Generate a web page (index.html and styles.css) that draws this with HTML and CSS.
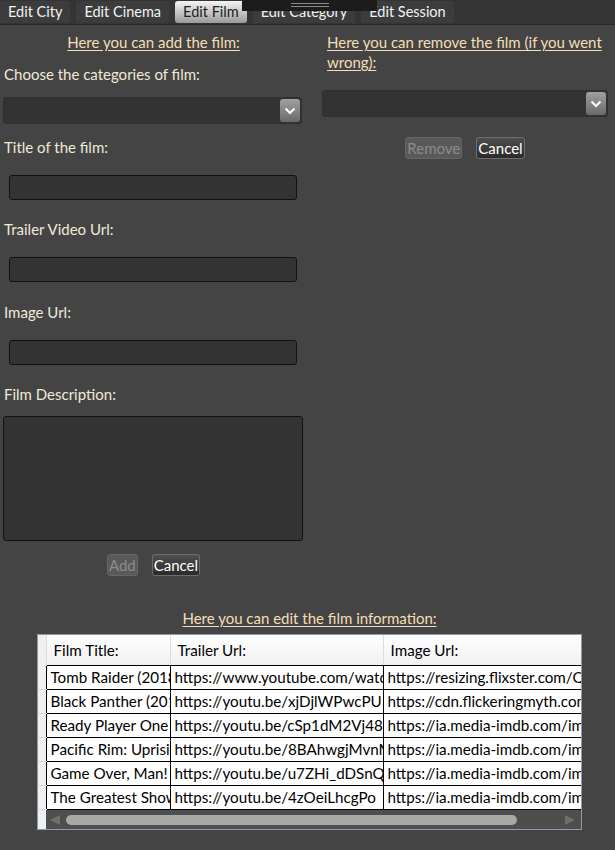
FILE: index.html
```html
<!DOCTYPE html>
<html>
<head>
<meta charset="utf-8">
<link rel="stylesheet" href="styles.css">
</head>
<body>
<div class="tabbar">
  <div class="tab">Edit City</div>
  <div class="tab">Edit Cinema</div>
  <div class="tab active">Edit Film</div>
  <div class="tab">Edit Category</div>
  <div class="tab">Edit Session</div>
  <div class="handle"><span></span><span></span></div>
</div>

<div class="top">
  <section class="col add">
    <h2 class="heading center">Here you can add the film:</h2>
    <div class="label l1">Choose the categories of film:</div>
    <div class="combo c-left">
      <span class="combo-btn"><svg width="20" height="23" viewBox="0 0 20 23"><path d="M5.5 9.5 L10 14 L14.5 9.5" fill="none" stroke="#fff" stroke-width="2.2"/></svg></span>
    </div>
    <div class="label l2">Title of the film:</div>
    <div class="input i1"></div>
    <div class="label l3">Trailer Video Url:</div>
    <div class="input i2"></div>
    <div class="label l4">Image Url:</div>
    <div class="input i3"></div>
    <div class="label l5">Film Description:</div>
    <div class="textarea"></div>
    <div class="buttons b-left">
      <button class="btn disabled">Add</button>
      <button class="btn">Cancel</button>
    </div>
  </section>

  <section class="col remove">
    <h2 class="heading rhead">Here you can remove the film (if you went wrong):</h2>
    <div class="combo c-right">
      <span class="combo-btn"><svg width="20" height="23" viewBox="0 0 20 23"><path d="M5.5 9.5 L10 14 L14.5 9.5" fill="none" stroke="#fff" stroke-width="2.2"/></svg></span>
    </div>
    <div class="buttons b-right">
      <button class="btn disabled">Remove</button>
      <button class="btn">Cancel</button>
    </div>
  </section>
</div>

<section class="edit">
  <h2 class="heading center">Here you can edit the film information:</h2>
  <div class="grid">
    <table class="films">
      <colgroup>
        <col class="c-rh"><col class="c-title"><col class="c-trailer"><col class="c-image">
      </colgroup>
      <thead>
        <tr><th class="rh"></th><th>Film Title:</th><th>Trailer Url:</th><th>Image Url:</th></tr>
      </thead>
      <tbody>
        <tr><td class="rh"></td><td>Tomb Raider (2018)</td><td>https://www.youtube.com/watch?v=8ndhidEmUbI</td><td>https://resizing.flixster.com/Qx</td></tr>
        <tr><td class="rh"></td><td>Black Panther (2018)</td><td>https://youtu.be/xjDjlWPwcPU</td><td>https://cdn.flickeringmyth.com/</td></tr>
        <tr><td class="rh"></td><td>Ready Player One</td><td>https://youtu.be/cSp1dM2Vj48</td><td>https://ia.media-imdb.com/images</td></tr>
        <tr><td class="rh"></td><td>Pacific Rim: Uprising</td><td>https://youtu.be/8BAhwgjMvnM</td><td>https://ia.media-imdb.com/images</td></tr>
        <tr><td class="rh"></td><td>Game Over, Man!</td><td>https://youtu.be/u7ZHi_dDSnQ</td><td>https://ia.media-imdb.com/images</td></tr>
        <tr><td class="rh"></td><td>The Greatest Showman</td><td>https://youtu.be/4zOeiLhcgPo</td><td>https://ia.media-imdb.com/images</td></tr>
      </tbody>
    </table>
    <div class="hscroll">
      <div class="sb-rh"></div>
      <div class="track">
        <span class="arrow left"></span>
        <span class="thumb"></span>
        <span class="arrow right"></span>
      </div>
    </div>
  </div>
</section>
</body>
</html>
```
FILE: styles.css
```css
* { box-sizing: border-box; }
html, body { margin: 0; padding: 0; }
body {
  width: 615px;
  height: 850px;
  background: #444444;
  font-family: "Lato", "Open Sans", sans-serif;
  font-size: 15px;
  color: #f0e9d8;
  overflow: hidden;
}

/* tab bar */
.tabbar {
  position: relative;
  display: flex;
  gap: 6px;
  height: 25px;
  background: #343434;
  border-bottom: 1px solid #2a2a2a;
  padding-top: 1px;
}
.tab {
  height: 22px;
  line-height: 22px;
  padding: 0 8px;
  background: #3c3c3c;
  color: #f2f2f2;
  border-radius: 2px 2px 0 0;
  font-size: 14.5px;
}
.tab.active {
  background: linear-gradient(#f4f4f4, #9a9a9a);
  color: #1e1e1e;
  border-radius: 3px;
}
.handle {
  position: absolute;
  left: 242px;
  top: 0;
  width: 135px;
  height: 11px;
  background: #1c1c1c;
  display: flex;
  flex-direction: column;
  align-items: center;
  gap: 2px;
  padding-top: 3px;
}
.handle span {
  width: 38px;
  height: 1px;
  background: #8a8a8a;
}

/* top columns */
.top {
  display: grid;
  grid-template-columns: 307px 286px;
  column-gap: 15px;
}
.col { display: flex; flex-direction: column; }

.heading {
  margin: 7px 0 0;
  font-size: 15px;
  font-weight: normal;
  line-height: 20px;
  color: #f5deb3;
  text-decoration: underline;
  text-underline-offset: 2px;
}
.center { text-align: center; }
.rhead { padding-left: 5px; padding-right: 0; }

.label { line-height: 20px; padding-left: 4px; }
.l1 { margin-top: 12px; }
.l2 { margin-top: 13px; }
.l3 { margin-top: 19px; }
.l4 { margin-top: 20px; }
.l5 { margin-top: 19px; }

.combo {
  position: relative;
  height: 27px;
  background: #333333;
  border: 1px solid #303030;
  border-radius: 3px;
  display: flex;
  justify-content: flex-end;
  align-items: center;
  padding-right: 1px;
}
.c-left { margin: 13px 0 0 3px; width: 299px; }
.c-right { margin-top: 18px; width: 286px; }
.combo-btn {
  width: 20px;
  height: 23px;
  border-radius: 3px;
  background: linear-gradient(#a0a0a0, #6a6a6a);
  display: flex;
}

.input {
  height: 25px;
  margin-left: 9px;
  width: 288px;
  background: #333333;
  border: 1px solid #111111;
  border-radius: 3px;
}
.i1 { margin-top: 18px; }
.i2 { margin-top: 18px; }
.i3 { margin-top: 18px; }

.textarea {
  margin: 12px 0 0 3px;
  width: 300px;
  height: 125px;
  background: #333333;
  border: 1px solid #111111;
  border-radius: 3px;
}

.buttons {
  display: flex;
  justify-content: center;
  gap: 14px;
  height: 22px;
}
.b-left { margin-top: 13px; }
.b-right { margin-top: 20px; }
.btn {
  height: 22px;
  padding: 0 1px;
  font-family: inherit;
  font-size: 15px;
  line-height: 20px;
  color: #ffffff;
  background: linear-gradient(#4e4e4e, #2a2a2a);
  border: 1px solid #6e6e6e;
  border-radius: 3px;
}
.btn.disabled {
  color: #8c8c8c;
  background: #595959;
  border-color: #666666;
}

/* bottom grid */
.edit {
  margin: 32px 0 0 37px;
  width: 545px;
}
.edit .heading { margin-top: 0; }
.grid {
  margin-top: 6px;
  width: 545px;
  height: 196px;
  border: 1px solid #8b9bb0;
  background: #ffffff;
  overflow: hidden;
}
.films {
  border-collapse: collapse;
  table-layout: fixed;
  width: 580px;
  font-size: 15.2px;
  color: #000;
}
.c-rh { width: 8px; }
.c-title { width: 124px; }
.c-trailer { width: 213px; }
.c-image { width: 235px; }
.films th {
  height: 30px;
  padding: 0 7px;
  text-align: left;
  font-weight: normal;
  background: linear-gradient(#ffffff, #f0f0f0);
  border-right: 1px solid #dcdcdc;
  border-bottom: 1px solid #000;
  white-space: nowrap;
  overflow: hidden;
}
.films td {
  height: 24px;
  padding: 0 4px;
  border: 1px solid #000;
  white-space: nowrap;
  overflow: hidden;
}
.films .rh {
  background: #f0f0f0;
  padding: 0;
  border: none;
  border-bottom: 1px solid #d8d8d8;
}
.films thead .rh { border-bottom: none; border-right: 1px solid #dcdcdc; }
.films tr:first-child td { border-top: none; }
.films td:first-child + td { border-left: 1px solid #000; }

.hscroll {
  display: flex;
  height: 21px;
}
.sb-rh { width: 8px; background: #eef0f4; }
.track {
  flex: 1;
  background: #4e4e4e;
  display: flex;
  align-items: center;
  padding: 0 6px 0 4px;
}
.arrow {
  width: 0;
  height: 0;
  border-top: 5px solid transparent;
  border-bottom: 5px solid transparent;
}
.arrow.left { border-right: 10px solid #6f6f6f; margin-right: 6px; }
.arrow.right { border-left: 10px solid #6f6f6f; margin-left: auto; }
.thumb {
  width: 451px;
  height: 10px;
  border-radius: 5px;
  background: #a8a8a8;
}
```
